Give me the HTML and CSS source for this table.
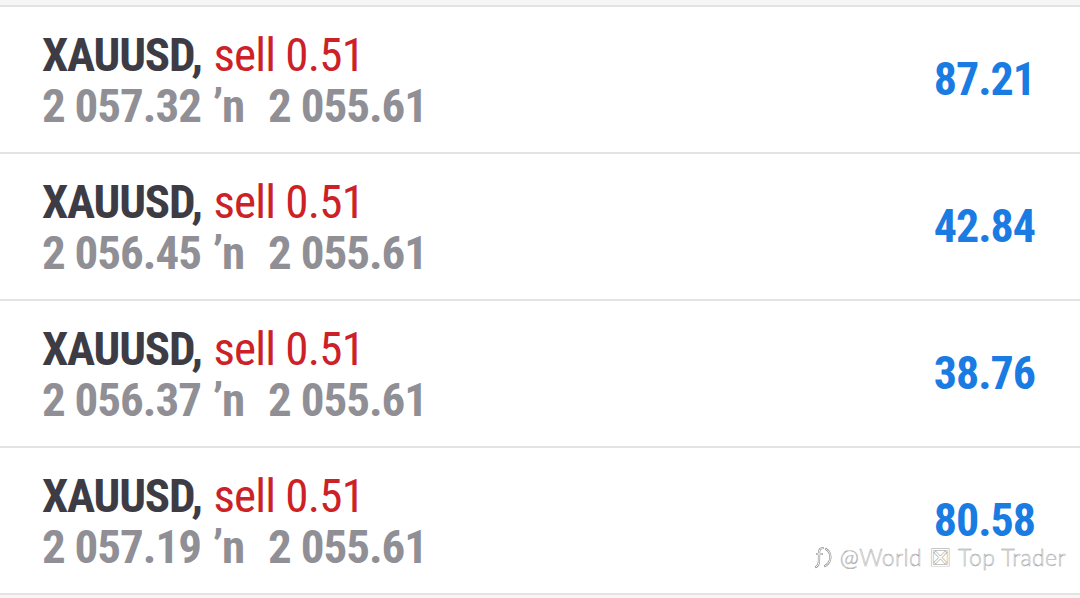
FILE: index.html
```html
<!DOCTYPE html>
<html>
<head>
<meta charset="utf-8">
<link rel="stylesheet" href="styles.css">
</head>
<body>
<div class="screen">
  <div class="topstrip"></div>
  <div class="list">
    <div class="row">
      <div class="info">
        <div class="line1"><span class="sym">XAUUSD,</span> <span class="side">sell 0.51</span></div>
        <div class="line2">2 057.32 <span class="arrow">ʼn</span><span class="close">2 055.61</span></div>
      </div>
      <div class="profit">87.21</div>
    </div>
    <div class="row">
      <div class="info">
        <div class="line1"><span class="sym">XAUUSD,</span> <span class="side">sell 0.51</span></div>
        <div class="line2">2 056.45 <span class="arrow">ʼn</span><span class="close">2 055.61</span></div>
      </div>
      <div class="profit">42.84</div>
    </div>
    <div class="row">
      <div class="info">
        <div class="line1"><span class="sym">XAUUSD,</span> <span class="side">sell 0.51</span></div>
        <div class="line2">2 056.37 <span class="arrow">ʼn</span><span class="close">2 055.61</span></div>
      </div>
      <div class="profit">38.76</div>
    </div>
    <div class="row">
      <div class="info">
        <div class="line1"><span class="sym">XAUUSD,</span> <span class="side">sell 0.51</span></div>
        <div class="line2">2 057.19 <span class="arrow">ʼn</span><span class="close">2 055.61</span></div>
      </div>
      <div class="profit">80.58</div>
    </div>
  </div>
  <div class="watermark">
    <svg class="wm-icon" width="20" height="26" viewBox="0 0 20 26"><g fill="none" stroke-linecap="round"><path d="M9 4 C6 4 5 6 5 9 L5 16 C5 20 4 22 2 23 M3 10 L8 10 M12 5 C16 7 17 12 16 16 C15 19 13 21 11 22" stroke="#8c8c8c" stroke-width="2.2"/><path d="M9 4 C6 4 5 6 5 9 L5 16 C5 20 4 22 2 23 M3 10 L8 10 M12 5 C16 7 17 12 16 16 C15 19 13 21 11 22" stroke="#fff" stroke-width="1"/></g></svg>
    <span class="wm-text">@World <span class="wm-box">⊠</span> Top Trader</span>
  </div>
</div>
</body>
</html>
```
FILE: styles.css
```css
html, body {
  margin: 0;
  padding: 0;
  background: #ffffff;
}
.screen {
  position: relative;
  width: 1080px;
  height: 598px;
  overflow: hidden;
  background: #f6f6f6;
  font-family: "Roboto Condensed", Roboto, sans-serif;
  font-stretch: condensed;
}
.topstrip {
  height: 5px;
  background: #f6f6f6;
  border-bottom: 2px solid #e3e3e3;
}
.list {
  display: flex;
  flex-direction: column;
}
.row {
  height: 145px;
  background: #ffffff;
  border-bottom: 2px solid #e3e3e3;
  display: flex;
  align-items: center;
  justify-content: space-between;
  padding: 0 45px 0 42px;
}
.info {
  align-self: flex-start;
  padding-top: 22px;
}
.line1, .line2 {
  font-size: 47px;
  line-height: 51px;
  white-space: nowrap;
  letter-spacing: -1.2px;
}
.sym {
  font-weight: 700;
  color: #3d3c45;
}
.side {
  font-weight: 400;
  color: #cc2127;
  margin-left: 2px;
  letter-spacing: -0.8px;
}
.line2 {
  font-weight: 700;
  color: #8f8f95;
  letter-spacing: -1px;
}
.arrow {
  margin-left: 2px;
}
.close {
  margin-left: 24px;
}
.profit {
  font-size: 46px;
  line-height: 40px;
  font-weight: 700;
  color: #1a7be3;
  letter-spacing: -1px;
  margin-top: -2px;
}
.watermark {
  position: absolute;
  right: 14px;
  bottom: 28px;
  display: flex;
  align-items: center;
  gap: 6px;
}
.wm-text {
  font-family: Lato, sans-serif;
  font-stretch: normal;
  font-weight: 300;
  font-size: 23px;
  line-height: 20px;
  letter-spacing: 0.4px;
  color: #ffffff;
  -webkit-text-stroke: 0.45px #999999;
}
.wm-box {
  font-family: "DejaVu Sans", sans-serif;
  font-size: 27px;
  line-height: 20px;
  font-weight: 300;
}
```
